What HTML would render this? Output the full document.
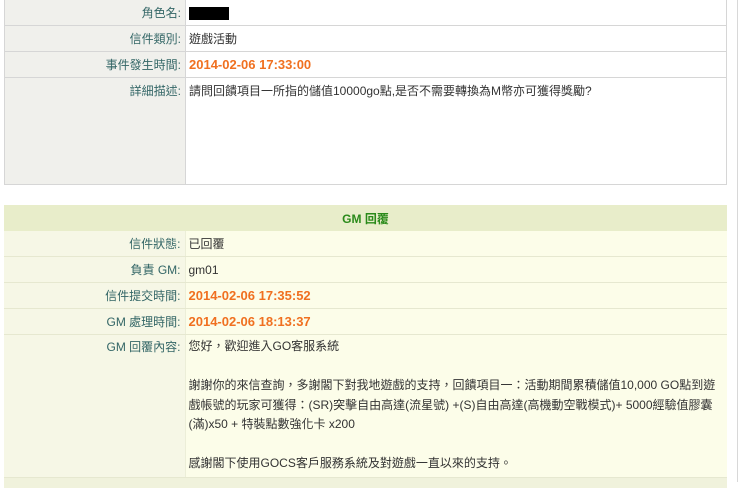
<!DOCTYPE html>
<html><head><meta charset="utf-8"><style>
body{margin:0;background:#fff;width:740px;height:482px;overflow:hidden;position:relative;font-family:"Liberation Sans","Noto Sans CJK TC",sans-serif;font-size:12px;}
.vl{position:absolute;left:737px;top:0;width:1px;height:482px;background:#d8d8d8;}
table{border-collapse:collapse;position:absolute;left:4px;table-layout:fixed;}
td{padding:0 3px;vertical-align:middle;}
#t1{top:-1px;width:723px;border:1px solid #ccc;}
#t1 td{border:1px solid #d6d6d6;height:25px;}
#t1 td.l{background:#f0f0ec;text-align:right;color:#336666;padding-right:4px}
#t1 td.v{background:#fff;color:#333}
#t2{top:205px;width:723px;}
#t2 td{border-bottom:1px solid #e6e8d0;height:25px;}
#t2 td.h{background:#e8edca;text-align:center;color:#2a8a1a;font-weight:bold;height:26px;border:none}
#t2 td.l{background:#f6f7e6;text-align:right;color:#336666;padding-right:4px;border-right:1px solid #eceed8}
#t2 td.v{background:#fcfde9;color:#333}
.o{color:#f07020;font-weight:bold;font-size:13px}
.g{color:#666}
.top{vertical-align:top!important;padding-top:4px!important}
</style></head><body>
<div class="vl"></div>
<table id="t1"><colgroup><col style="width:181px"><col></colgroup>
<tr><td class="l">角色名:</td><td class="v"><span style="display:inline-block;width:40px;height:13px;background:#000;vertical-align:middle"></span></td></tr>
<tr><td class="l">信件類別:</td><td class="v g">遊戲活動</td></tr>
<tr><td class="l">事件發生時間:</td><td class="v"><span class="o">2014-02-06 17:33:00</span></td></tr>
<tr><td class="l top" style="height:102px">詳細描述:</td><td class="v top" style="height:102px">請問回饋項目一所指的儲值10000go點,是否不需要轉換為M幣亦可獲得獎勵?</td></tr>
</table>
<table id="t2"><colgroup><col style="width:181px"><col></colgroup>
<tr><td class="h" colspan="2">GM 回覆</td></tr>
<tr><td class="l">信件狀態:</td><td class="v">已回覆</td></tr>
<tr><td class="l">負責 GM:</td><td class="v g">gm01</td></tr>
<tr><td class="l">信件提交時間:</td><td class="v"><span class="o">2014-02-06 17:35:52</span></td></tr>
<tr><td class="l">GM 處理時間:</td><td class="v"><span class="o">2014-02-06 18:13:37</span></td></tr>
<tr><td class="l top" style="height:139px;padding-top:3px!important">GM 回覆內容:</td><td class="v top" style="height:139px;line-height:19.5px;padding-top:2px!important">您好，歡迎進入GO客服系統<br><br>謝謝你的來信查詢，多謝閣下對我地遊戲的支持，回饋項目一：活動期間累積儲值10,000 GO點到遊<br>戲帳號的玩家可獲得：(SR)突擊自由高達(流星號) +(S)自由高達(高機動空戰模式)+ 5000經驗值膠囊<br>(滿)x50 + 特裝點數強化卡 x200<br><br>感謝閣下使用GOCS客戶服務系統及對遊戲一直以來的支持。</td></tr>
<tr><td colspan="2" style="background:#f0f2dc;height:10px;border:none"></td></tr>
</table>
</body></html>
